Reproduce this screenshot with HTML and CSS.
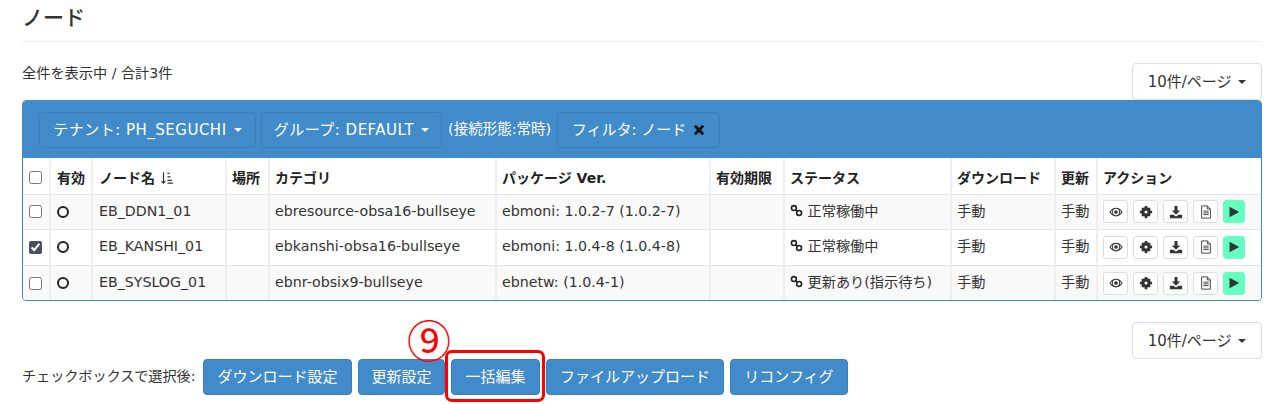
FILE: index.html
```html
<!DOCTYPE html>
<html lang="ja">
<head>
<meta charset="utf-8">
<title>ノード</title>
<link rel="stylesheet" href="styles.css">
</head>
<body>
<svg class="defs" width="0" height="0" aria-hidden="true">
  <symbol id="i-eye" viewBox="0 0 16 16"><path fill-rule="evenodd" d="M8 3C4.6 3 1.800 5.300.5 8c1.300 2.700 4.100 5 7.500 5s6.200-2.300 7.500-5C14.200 5.300 11.400 3 8 3zM8 4.400a3.600 3.600 0 1 1 0 7.200 3.600 3.600 0 0 1 0-7.200zM3.800 5.700A6 6 0 0 0 2 8a6 6 0 0 0 2 2.300A5 5 0 0 1 3.800 5.700zM12.200 5.700a5 5 0 0 1 .1 4.600A6 6 0 0 0 14 8a6 6 0 0 0-1.800-2.300z"/><circle cx="8" cy="8" r="2.100"/></symbol>
  <symbol id="i-cog" viewBox="0 0 16 16"><circle cx="8" cy="8" r="3.600" fill="none" stroke="currentColor" stroke-width="3.600"/><path d="M6.500 1h3v3h-3zM6.500 12h3v3h-3zM1 6.500h3v3H1zM12 6.500h3v3h-3zM2.500 4.600l2.100-2.100 2 2-2.100 2.100zM9.400 11.500l2.100-2.100 2 2-2.100 2.100zM11.400 2.500l2.100 2.100-2 2-2.100-2.100zM4.500 9.400l2.100 2.100-2 2-2.100-2.100z"/></symbol>
  <symbol id="i-dl" viewBox="0 0 16 16"><path d="M6.300 1h3.400v5.200h3L8 11 3.300 6.200h3z"/><path d="M1 11h4l3 2.200 3-2.200h4v4H1z"/></symbol>
  <symbol id="i-file" viewBox="0 0 16 16"><path d="M3 1h6.500L13 4.500V15H3z" fill="#fff" stroke="currentColor" stroke-width="1"/><path d="M9.500 1v3.500H13" fill="none" stroke="currentColor"/><path d="M5 7h6M5 9h6M5 11h6" stroke="currentColor" stroke-width="1"/></symbol>
  <symbol id="i-play" viewBox="0 0 16 16"><path d="M2 1l13 7-13 7z"/></symbol>
  <symbol id="i-link" viewBox="0 0 16 16"><g fill="none" stroke="currentColor" stroke-width="2"><circle cx="4.800" cy="5" r="3"/><circle cx="11.200" cy="11" r="3"/><path d="M7 7.200l2 1.800"/></g></symbol>
  <symbol id="i-sort" viewBox="0 0 16 16"><path d="M4 1.500v12M1.800 11.500L4 14l2.200-2.500" fill="none" stroke="currentColor" stroke-width="1.300"/><path d="M8.500 2h2.500v1.500H8.500zM8.500 6h3.500v1.500H8.500zM8.500 10h5v1.500h-5zM8.500 13h6.500v1.500H8.500z"/></symbol>
  <symbol id="i-x" viewBox="0 0 12 12"><path d="M2.800.8L6 4l3.200-3.200 2 2L8 6l3.200 3.200-2 2L6 8l-3.200 3.200-2-2L4 6 .8 2.800z"/></symbol>
</svg>

<main class="page">
  <h1 class="title">ノード</h1>

  <div class="summary-row">
    <p class="summary">全件を表示中 / 合計3件</p>
    <button class="btn btn-default">10件/ページ <span class="caret"></span></button>
  </div>

  <section class="panel">
    <div class="panel-heading">
      <button class="btn btn-primary btn-wide">テナント: PH_SEGUCHI <span class="caret"></span></button>
      <button class="btn btn-primary btn-wide">グループ: DEFAULT <span class="caret"></span></button>
      <span class="mode">(接続形態:常時)</span>
      <button class="btn btn-primary">フィルタ: ノード <svg class="icon-x"><use href="#i-x"/></svg></button>
    </div>
    <table class="nodes">
      <thead>
        <tr>
          <th class="c-check"><input type="checkbox" class="check"></th>
          <th class="c-on">有効</th>
          <th class="c-name">ノード名 <svg class="icon-sort"><use href="#i-sort"/></svg></th>
          <th class="c-place">場所</th>
          <th class="c-cat">カテゴリ</th>
          <th class="c-pkg">パッケージ Ver.</th>
          <th class="c-exp">有効期限</th>
          <th class="c-status">ステータス</th>
          <th class="c-dl">ダウンロード</th>
          <th class="c-upd">更新</th>
          <th class="c-act">アクション</th>
        </tr>
      </thead>
      <tbody>
        <tr>
          <td><input type="checkbox" class="check"></td>
          <td><span class="ring"></span></td>
          <td>EB_DDN1_01</td>
          <td></td>
          <td>ebresource-obsa16-bullseye</td>
          <td>ebmoni: 1.0.2-7 (1.0.2-7)</td>
          <td></td>
          <td><svg class="icon-link"><use href="#i-link"/></svg> 正常稼働中</td>
          <td>手動</td>
          <td>手動</td>
          <td class="actions">
            <button class="act"><svg><use href="#i-eye"/></svg></button><button class="act"><svg><use href="#i-cog"/></svg></button><button class="act"><svg><use href="#i-dl"/></svg></button><button class="act"><svg><use href="#i-file"/></svg></button><button class="act act-run"><svg><use href="#i-play"/></svg></button>
          </td>
        </tr>
        <tr>
          <td><input type="checkbox" class="check" checked></td>
          <td><span class="ring"></span></td>
          <td>EB_KANSHI_01</td>
          <td></td>
          <td>ebkanshi-obsa16-bullseye</td>
          <td>ebmoni: 1.0.4-8 (1.0.4-8)</td>
          <td></td>
          <td><svg class="icon-link"><use href="#i-link"/></svg> 正常稼働中</td>
          <td>手動</td>
          <td>手動</td>
          <td class="actions">
            <button class="act"><svg><use href="#i-eye"/></svg></button><button class="act"><svg><use href="#i-cog"/></svg></button><button class="act"><svg><use href="#i-dl"/></svg></button><button class="act"><svg><use href="#i-file"/></svg></button><button class="act act-run"><svg><use href="#i-play"/></svg></button>
          </td>
        </tr>
        <tr>
          <td><input type="checkbox" class="check"></td>
          <td><span class="ring"></span></td>
          <td>EB_SYSLOG_01</td>
          <td></td>
          <td>ebnr-obsix9-bullseye</td>
          <td>ebnetw: (1.0.4-1)</td>
          <td></td>
          <td><svg class="icon-link"><use href="#i-link"/></svg> 更新あり(指示待ち)</td>
          <td>手動</td>
          <td>手動</td>
          <td class="actions">
            <button class="act"><svg><use href="#i-eye"/></svg></button><button class="act"><svg><use href="#i-cog"/></svg></button><button class="act"><svg><use href="#i-dl"/></svg></button><button class="act"><svg><use href="#i-file"/></svg></button><button class="act act-run"><svg><use href="#i-play"/></svg></button>
          </td>
        </tr>
      </tbody>
    </table>
  </section>

  <div class="pager-row">
    <button class="btn btn-default">10件/ページ <span class="caret"></span></button>
  </div>

  <div class="bulk-row">
    <span class="bulk-label">チェックボックスで選択後:</span>
    <button class="btn btn-primary">ダウンロード設定</button>
    <button class="btn btn-primary">更新設定</button>
    <span class="callout">
      <button class="btn btn-primary">一括編集</button>
      <span class="callout-box"></span>
      <span class="callout-num">⑨</span>
    </span>
    <button class="btn btn-primary">ファイルアップロード</button>
    <button class="btn btn-primary">リコンフィグ</button>
  </div>
</main>
</body>
</html>
```

FILE: styles.css
```css
* { box-sizing: border-box; }
html, body { margin: 0; padding: 0; background: #fff; }
body {
  height: 404px;
  overflow: hidden;
  color: #333;
  font-family: "DejaVu Sans", "Noto Sans CJK JP", sans-serif;
  font-size: 14.2px;
  line-height: 20px;
}
.defs { position: absolute; }
.page { padding: 0 18px 0 22px; }

.title {
  margin: 0;
  height: 42px;
  padding-top: 0;
  border-bottom: 1px solid #eee;
  font-size: 21px;
  line-height: 32px;
  font-weight: 500;
  font-family: "Noto Sans CJK JP", sans-serif;
}

.summary-row { display: flex; justify-content: space-between; height: 58px; padding-top: 21px; }
.summary { margin: 0; line-height: 20px; font-size: 14.2px; }

.btn {
  display: inline-block;
  height: 37px;
  padding: 0;
  border: 1px solid transparent;
  border-radius: 4px;
  font: inherit;
  font-size: 15px;
  white-space: nowrap;
  cursor: pointer;
}
.btn-default { background: #fff; border-color: #ddd; color: #333; width: 130px; }
.btn-primary { background: #428bca; border-color: #3a7fbb; color: #fff; }
.btn-wide { letter-spacing: .5px; }
.caret {
  display: inline-block;
  width: 0; height: 0;
  margin-left: 2px;
  vertical-align: middle;
  border-top: 4px solid currentColor;
  border-left: 4px solid transparent;
  border-right: 4px solid transparent;
}

.panel {
  border: 1px solid #428bca;
  border-radius: 4px;
  overflow: hidden;
  height: 201px;
}
.panel-heading {
  display: flex;
  align-items: center;
  height: 57px;
  padding: 0 16px;
  background: #428bca;
  color: #fff;
}
.panel-heading .btn { height: 36px; margin-right: 5px; }
.panel-heading .btn:nth-child(1) { width: 217px; }
.panel-heading .btn:nth-child(2) { width: 181px; }
.panel-heading .btn:nth-child(4) { width: 163px; margin-right: 0; }
.mode { width: 110px; font-size: 14.500px; padding-left: 1px; margin-bottom: 1px; white-space: nowrap; }
.icon-x { width: 12px; height: 12px; margin-left: 2px; vertical-align: -1px; color: #111; fill: currentColor; }

.nodes { width: 100%; border-collapse: collapse; table-layout: fixed; }
.nodes th, .nodes td {
  padding: 0 5px;
  border-left: 2px solid #eee;
  border-bottom: 1px solid #e4e4e4;
  text-align: left;
  white-space: nowrap;
  overflow: hidden;
  font-size: 14.2px;
  vertical-align: middle;
}
.nodes th:first-child, .nodes td:first-child { border-left: 0; }
.nodes th:nth-child(-n+3), .nodes td:nth-child(-n+3) { padding-left: 6px; }
.nodes th { height: 36px; padding-top: 4px; font-size: 14px; font-weight: 700; color: #222; }
.nodes td { height: 35.500px; padding-bottom: 2px; }
.nodes tbody tr:nth-child(odd) td { background: #f9f9f9; }
.nodes tbody tr:last-child td { border-bottom: 0; }
.nodes td:first-child, .nodes td:nth-child(2) { padding-bottom: 0; }

.c-check { width: 27px; }
.c-on { width: 42px; }
.c-name { width: 134px; }
.c-place { width: 43px; }
.c-cat { width: 227px; }
.c-pkg { width: 214px; }
.c-exp { width: 74px; }
.c-status { width: 167px; }
.c-dl { width: 104px; }
.c-upd { width: 42px; }

.check { display: block; width: 13px; height: 13px; margin: 0; accent-color: #4a4f66; }
.ring { display: block; width: 12px; height: 12px; border: 2px solid #222; border-radius: 50%; }
.icon-sort { width: 14px; height: 14px; vertical-align: -2px; color: #333; fill: currentColor; }
.icon-link { width: 13px; height: 13px; vertical-align: -1px; color: #222; fill: none; }

.nodes .actions { padding: 0 0 0 5px; }
.act {
  display: inline-flex;
  align-items: center;
  justify-content: center;
  width: 25px;
  height: 23px;
  margin-right: 5px;
  padding: 0;
  border: 1px solid #ddd;
  border-radius: 3px;
  background: #fff;
  color: #333;
  vertical-align: middle;
}
.act svg { width: 14px; height: 14px; fill: currentColor; }
.act-run { width: 22px; background: #66ffc2; border-color: #66ffc2; }
.act-run svg { width: 12px; height: 12px; }

.pager-row { display: flex; justify-content: flex-end; padding-top: 21px; height: 58px; }

.bulk-row { display: flex; align-items: center; gap: 6px; height: 36px; }
.bulk-row .btn { height: 36px; }
.bulk-label { width: 175px; margin-bottom: 2px; white-space: nowrap; letter-spacing: -.1px; }
.bulk-row > .btn:nth-of-type(1) { width: 149px; }
.bulk-row > .btn:nth-of-type(2) { width: 87px; }
.bulk-row > .btn:nth-of-type(3) { width: 178px; }
.bulk-row > .btn:nth-of-type(4) { width: 118px; }
.callout { position: relative; display: block; width: 89px; }
.callout .btn { width: 89px; display: block; }
.callout-box {
  position: absolute;
  left: -6px; top: -9px;
  width: 100px; height: 52px;
  border: 3px solid #f00;
  border-radius: 7px;
}
.callout-num {
  position: absolute;
  left: -44px; top: -42px;
  width: 44px;
  color: #f00;
  font-family: "Noto Sans CJK JP", sans-serif;
  font-size: 44px;
  line-height: 44px;
  text-align: center;
}
```
